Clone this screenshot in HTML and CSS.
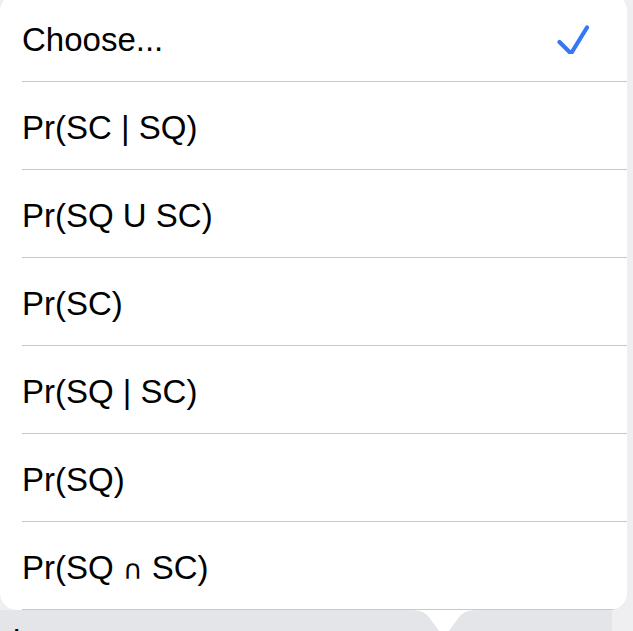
FILE: index.html
```html
<html lang="en">
<head>
    <meta charset="UTF-8">
    <meta name="viewport" content="width=device-width, initial-scale=1.0">
    <title> Picker </title>
    <link rel="stylesheet" href="styles.css">
</head>
<body>

    <div class="popover">
        <ul class="options">
            <li class="option selected">
                <span>Choose...</span>
                <svg class="check" width="32" height="32" viewBox="0 0 32 32">
                    <path d="M2.5 20 L14 31.5 L30 5.5" />
                </svg>
            </li>
            <li class="option"><span>Pr(SC | SQ)</span></li>
            <li class="option"><span>Pr(SQ U SC)</span></li>
            <li class="option"><span>Pr(SC)</span></li>
            <li class="option"><span>Pr(SQ | SC)</span></li>
            <li class="option"><span>Pr(SQ)</span></li>
            <li class="option"><span>Pr(SQ <span class="cap">∩</span> SC)</span></li>
        </ul>
    </div>

    <div class="below">
        <p class="hint">become true</p>
        <svg class="arrow" width="80" height="22" viewBox="0 0 80 22">
            <path d="M6 0 C16 0 20 2 24 6 L36 22 H44 L56 6 C60 2 64 0 74 0 Z" />
        </svg>
    </div>

</body>
</html>
```

FILE: styles.css
```css
html, body {
    margin: 0;
    height: 631px;
    overflow: hidden;
}
body {
    background: #efeff1;
    font-family: "Liberation Sans", Arial, sans-serif;
}
.popover {
    width: 627px;
    margin-top: -6px;
    background: #fff;
    border-radius: 17px;
    overflow: hidden;
}
.options {
    list-style: none;
    margin: 0;
    padding: 0;
}
.option {
    display: flex;
    align-items: center;
    justify-content: space-between;
    box-sizing: border-box;
    height: 88px;
    padding: 3px 38px 0 22px;
    font-size: 33px;
    color: #000;
    position: relative;
}
.option::after {
    content: "";
    position: absolute;
    left: 22px;
    right: 0;
    bottom: 0;
    height: 1px;
    background: #c8c7cc;
}
.cap {
    font-family: "DejaVu Sans", sans-serif;
    font-size: 27px;
}
.check {
    margin-top: -3px;
}
.check path {
    fill: none;
    stroke: #3478f6;
    stroke-width: 4.2;
    stroke-linecap: round;
    stroke-linejoin: round;
}
.below {
    position: relative;
    width: 612px;
    height: 21px;
    background: #e3e5e8;
    overflow: hidden;
}
.hint {
    margin: 0;
    padding: 13px 0 0 13px;
    font-size: 33px;
    color: #000;
}
.arrow {
    position: absolute;
    left: 404px;
    top: 0;
}
.arrow path {
    fill: #fff;
}
```
